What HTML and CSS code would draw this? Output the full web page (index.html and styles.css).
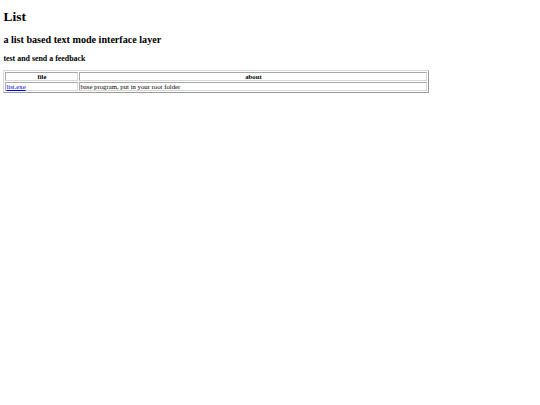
FILE: index.html
```html
<!DOCTYPE html>
<html>
<head>
<meta charset="utf-8">
<title>List</title>
<link rel="stylesheet" href="styles.css">
</head>
<body>
<h1 class="title">List</h1>
<h2 class="subtitle">a list based text mode interface layer</h2>
<h3 class="note">test and send a feedback</h3>
<table class="files">
<tr><th class="c-file">file</th><th class="c-about">about</th></tr>
<tr><td class="c-file"><a href="#">list.exe</a></td><td class="c-about">base program, put in your root folder</td></tr>
</table>
</body>
</html>
```
FILE: styles.css
```css
html, body { background: #fff; }
body {
  margin: 3.4px;
  font-family: "Liberation Serif", "Times New Roman", serif;
  color: #000;
}
.title { font-size: 13.5px; margin: 5.6px 0 9.2px; font-weight: bold; }
.subtitle { font-size: 10.125px; margin: 9.2px 0; font-weight: bold; }
.note { font-size: 7.9px; margin: 7.9px 0 6.5px; font-weight: bold; }
.files {
  width: 426px;
  border: 1px solid;
  border-color: #d8d8d8 #9a9a9a #9a9a9a #d8d8d8;
  border-spacing: 1px;
  font-size: 6.75px;
}
.files th, .files td {
  border: 1px solid;
  border-color: #a8a8a8 #d8d8d8 #d8d8d8 #a8a8a8;
  padding: 0;
}
.files th { font-weight: bold; text-align: center; }
.files td { text-align: left; }
.c-file { width: 71px; }
.files a { color: #0000ee; }
```
